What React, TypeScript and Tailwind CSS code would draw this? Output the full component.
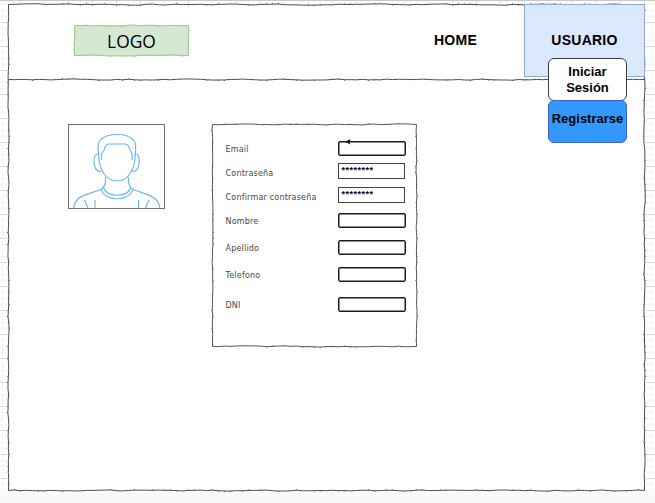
import React from 'react';

/** One hand-drawn edge: a gently drifting line with short pen ticks every few pixels. */
function edge(x1: number, y1: number, x2: number, y2: number, seed: number): string {
  const horizontal = y1 === y2;
  const length = Math.abs(horizontal ? x2 - x1 : y2 - y1);
  const steps = Math.max(1, Math.floor(length / 6));
  let s = seed;
  let offset = 0;
  let d = `M${x1} ${y1}`;
  let ticks = '';
  for (let i = 1; i < steps; i++) {
    s = (s * 16807) % 2147483647;
    offset = offset * 0.45 + ((s % 1000) / 1000 - 0.5) * 0.95;
    const t = i / steps;
    const x = x1 + (x2 - x1) * t + (horizontal ? 0 : offset);
    const y = y1 + (y2 - y1) * t + (horizontal ? offset : 0);
    d += `L${x.toFixed(2)} ${y.toFixed(2)}`;
    if (s % 5 < 2) {
      const reach = offset > 0 ? 0.9 : -0.9;
      ticks += horizontal
        ? `M${x.toFixed(2)} ${y.toFixed(2)}v${reach}`
        : `M${x.toFixed(2)} ${y.toFixed(2)}h${reach}`;
    }
  }
  return d + `L${x2} ${y2}` + ticks;
}

function SketchBorder({ w, h, seed, className }: { w: number; h: number; seed: number; className: string }) {
  const r = w - 0.5;
  const b = h - 0.5;
  return (
    <svg className={`pointer-events-none absolute inset-0 overflow-visible ${className}`} width={w} height={h} fill="none">
      <path d={edge(0.5, 0.5, r, 0.5, seed) + edge(r, 0.5, r, b, seed + 71) + edge(0.5, b, r, b, seed + 913) + edge(0.5, 0.5, 0.5, b, seed + 377)} />
    </svg>
  );
}

function Avatar() {
  return (
    <div className="h-[85px] w-[97px] border border-[#707070] bg-white">
      <svg className="block" width="95" height="83" viewBox="69 125 95 83" fill="none" stroke="#6db5ee" strokeWidth="1.15" strokeLinejoin="round">
        <path d="M98.8 155 C97.6 149 97.4 144 99.5 141 C103.5 136.2 110 134.2 117 134.2 C124 134.2 130.5 136.2 134.3 141 C136.2 144 136 149 135.2 155" />
        <path d="M101.5 160 V154 C103 150.5 104.2 151.5 104.6 148.5 C105 146 106 144.5 109 144 H125 C128 144.5 129 146 129.4 148.5 C129.8 151.5 131 150.5 132.2 154 V160" />
        <path d="M98.6 153 C98.6 171 107 181 117 181 C127 181 135.4 171 135.4 153" />
        <path d="M98 154 C94.5 154 94 157.5 94 162 C94.3 168 96.5 171.8 101 171.5 M136 154 C138.8 154 139.4 157.5 139.2 162 C138.9 168 136.7 171.8 132.2 171.5" />
        <path d="M105.5 177 V181 C105.5 185 103.5 187.5 101 189.5 C103 195 109 198.7 117 198.7 C125 198.7 131 195 133 189.5 C129.5 187.5 128 184.5 128.3 177" />
        <path d="M103.5 187.5 C105 192.5 110 195.2 117 195.2 C124 195.2 129.5 192.5 130.8 187.5" />
        <path d="M101 189.5 C92 193 83 194.5 78 199 C75.5 201.5 74 204 73.5 208 M133 189.5 C142 193 151 194.5 155.5 199 C158 201.5 159.5 204 159.8 208" />
        <path d="M84.5 200 L88 208 M95 200 V208 M138.5 200 V208 M149 200 L145.5 208" />
      </svg>
    </div>
  );
}

type Field = { label: string; row: string; labelShift: string; password?: boolean; arrow?: boolean };

const fields: Field[] = [
  { label: 'Email', row: 'h-6', labelShift: 'pt-[2px]', arrow: true },
  { label: 'Contraseña', row: 'h-5', labelShift: 'pt-[6px]', password: true },
  { label: 'Confirmar contraseña', row: 'h-7', labelShift: 'pt-[6px]', password: true },
  { label: 'Nombre', row: 'h-6', labelShift: 'pt-[2px]' },
  { label: 'Apellido', row: 'h-[30px]', labelShift: 'pt-[2px]' },
  { label: 'Telefono', row: 'h-6', labelShift: 'pt-[2px]' },
  { label: 'DNI', row: 'h-9', labelShift: 'pt-[2px]' },
];

function FormRow({ field }: { field: Field }) {
  return (
    <div className={`flex shrink-0 items-center justify-between ${field.row}`}>
      <span className={`whitespace-nowrap text-[8px] leading-[10px] tracking-[0.2px] text-[#484848] ${field.labelShift}`}>{field.label}</span>
      {field.password ? (
        <div className="mr-px h-4 w-[67px] border border-[#424242] bg-white pl-[2.5px] font-['Liberation_Sans',Arial,sans-serif] text-[9px] leading-[13px] font-bold tracking-[0.48px] text-black">********</div>
      ) : (
        <div className="relative mb-px h-[15px] w-[68px] rounded-[2px] border border-[#1d1d1d] bg-white shadow-[inset_0_0_0_0.5px_#1d1d1d]">
          {field.arrow && (
            <svg className="absolute -top-[3px] left-[6px]" width="8" height="6" viewBox="0 0 8 6">
              <path d="M0 2.7 L5.5 0 L4.3 2.7 L5.5 5.4Z" fill="#111" />
            </svg>
          )}
        </div>
      )}
    </div>
  );
}

function UserMenu() {
  return (
    <div className="absolute top-[53px] left-[23px] z-10 flex w-[79px] flex-col text-center text-[13px] leading-4 font-bold tracking-normal text-black">
      <div className="h-[43px] rounded-[6px] border border-[#3c3c3c] bg-white pt-[5px]">Iniciar<br />Sesión</div>
      <div className="-mt-px h-[43px] rounded-[6px] border border-[#3f62d0] bg-[#3399ff] pt-[10px]">Registrarse</div>
    </div>
  );
}

export default function App() {
  return (
    <div className="flex h-[503px] w-[655px] flex-col overflow-hidden bg-[#f8f9fb] font-['Liberation_Sans',Arial,sans-serif]">
      <div className="relative h-[492px] w-full border-t border-[#c8c8c8] bg-white pt-[3px] pl-2">
        <svg className="absolute inset-0" width="655" height="490">
          <defs>
            <pattern id="grid" width="24" height="24" x="20" y="21" patternUnits="userSpaceOnUse">
              <path d="M6.5 0V24M12.5 0V24M18.5 0V24M0 6.5H24M0 12.5H24M0 18.5H24" stroke="#f5f5f5" />
              <path d="M.5 0V24M0 .5H24" stroke="#dedede" />
            </pattern>
          </defs>
          <rect width="655" height="490" fill="url(#grid)" />
        </svg>
        <main className="relative flex h-[487px] w-[637px] flex-col bg-white">
          <SketchBorder w={637} h={487} seed={1237} className="stroke-[#4b4b4b]" />
          <header className="relative flex h-[76px] shrink-0 items-start justify-between pl-[66px]">
            <svg className="absolute bottom-0 left-0 overflow-visible" width="637" height="1" fill="none" stroke="#4b4b4b">
              <path d={edge(0.5, 0.5, 636.5, 0.5, 4297)} />
            </svg>
            <div className="relative mt-[21px] flex h-[31px] w-[115px] items-center justify-center bg-[#d5e8d4] font-['Open_Sans','Noto_Sans',sans-serif] text-[17.4px] leading-5 text-black">
              <SketchBorder w={115} h={31} seed={831} className="stroke-[#9fc78a]" />
              LOGO
            </div>
            <nav className="flex">
              <div className="flex h-[73px] w-[137px] items-center justify-center text-[14px] font-bold tracking-[0.25px] text-black">HOME</div>
              <div className="relative flex h-[73px] w-[121px] items-center justify-center border border-[#92abd1] bg-[#dae8fc] text-[14px] font-bold tracking-[0.25px] text-black">
                USUARIO
                <UserMenu />
              </div>
            </nav>
          </header>
          <section className="flex items-start gap-[47px] pt-11 pl-[60px]">
            <Avatar />
            <form className="relative flex h-[223px] w-[205px] flex-col bg-white pt-[13px] pr-[11px] pl-[13.5px] font-['DejaVu_Sans',Verdana,sans-serif]">
              <SketchBorder w={205} h={223} seed={3001} className="stroke-[#555]" />
              {fields.map((field) => <FormRow key={field.label} field={field} />)}
            </form>
          </section>
        </main>
      </div>
    </div>
  );
}
